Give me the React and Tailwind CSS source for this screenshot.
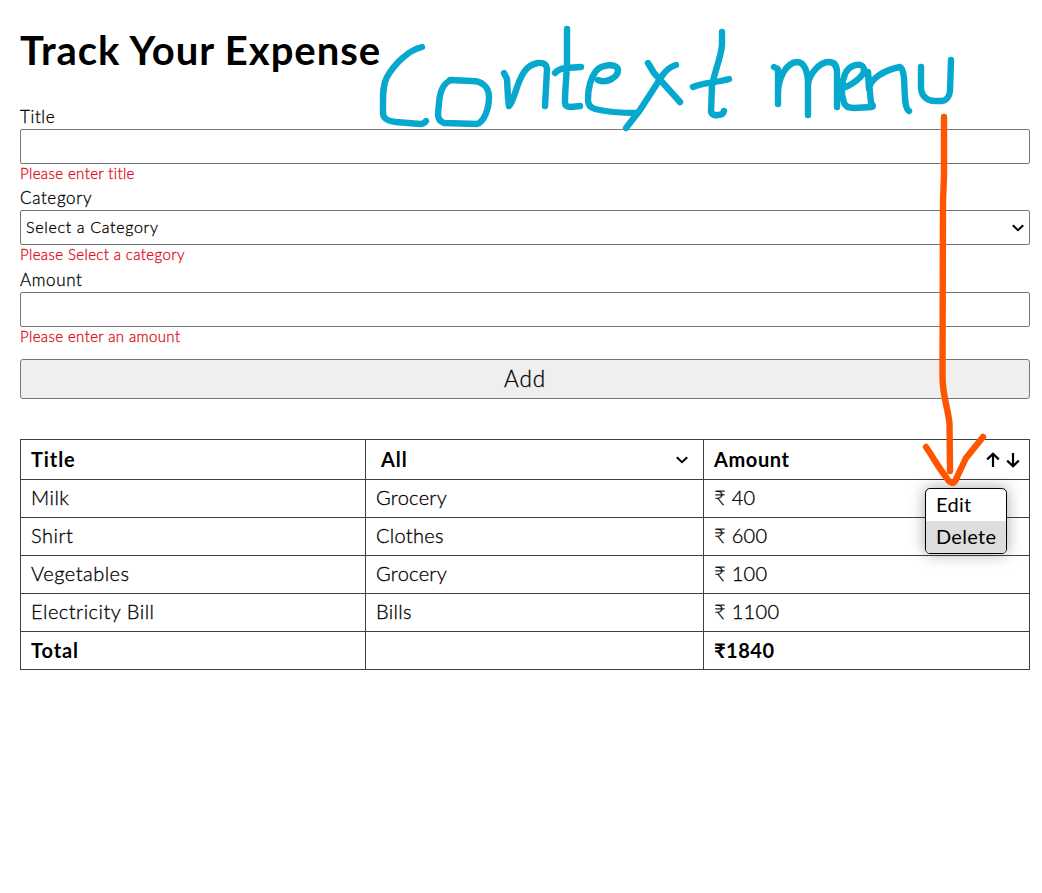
import React from "react";

const expenses = [
  ["Milk", "Grocery", "40"],
  ["Shirt", "Clothes", "600"],
  ["Vegetables", "Grocery", "100"],
  ["Electricity Bill", "Bills", "1100"],
];

function Chevron({ className }) {
  return (
    <svg className={className} width="14" height="10" viewBox="0 0 14 10" fill="none" stroke="#000" strokeWidth="2">
      <path d="M1.8 2.2 L7 7.2 L12.2 2.2" />
    </svg>
  );
}

function SortArrow({ down }) {
  return (
    <svg width="14" height="16" viewBox="0 0 14 16" fill="none" stroke="#000" strokeWidth="2.2">
      {down ? <path d="M7 1V14.2M1.2 8.6L7 14.2L12.8 8.6" /> : <path d="M7 15V1.8M1.2 7.4L7 1.8L12.8 7.4" />}
    </svg>
  );
}

function Field({ label, error, children }) {
  return (
    <div className="flex flex-col">
      <label className="h-[23px] text-[17px] leading-[21px] tracking-[0.65px]">{label}</label>
      <div className="flex h-[35px] items-center justify-between rounded-[2px] border border-[#767676] px-[5px]">
        {children}
      </div>
      <p className="h-5 text-[15px] leading-[18px] tracking-[0.38px] text-[#dc1020]">{error}</p>
    </div>
  );
}

function Annotation() {
  return (
    <svg className="pointer-events-none absolute left-0 top-0" width="1042" height="893" viewBox="0 0 1042 893" fill="none" strokeLinecap="round" strokeLinejoin="round">
      <g stroke="#06a9cd" strokeWidth="6.4">
        <path d="M422 47 C409 50 395 63 387 77 C383 84 383 93 383 102 L383 113 C383 119 388 121 396 122 L420 124 Q424 124 426 121" />
        <path d="M452 80 C444 82 440 90 439 103 L438 114 Q438 121 444 123 L477 124 C484 122 489 109 489 97 C489 87 482 81 472 81 L450 80" />
        <path d="M504 73 L507 79 L508 98 L509 106 C514 102 516 84 524 72 C531 62 546 59 547 69 L545 106" />
        <path d="M567 29 L567 60 C567 75 565 85 565 103 Q565 107 571 107 L580 106 M555 73 Q558 69 566 68 L581 67" />
        <path d="M598 80 C607 84 618 77 618 70 C617 63 602 64 596 71 C589 80 588 92 588 100 Q588 107 595 109 C607 112 622 113 637 113" />
        <path d="M648 63 L654 73 L680 102 M676 65 Q668 67 662 76 L640 110 L626 128" />
        <path d="M722 32 L722 45 C721 58 714 73 712 86 L711 112 Q713 116 718 115 Q723 115 724 111 M693 87 C704 82 716 83 729 79" />
        <path d="M774 67 L778 69 L778 104 L778 94 C778 80 785 63 797 62 C804 62 808 71 808 84 L808 115 L808 84 C809 76 818 62 829 62 Q837 62 837 73 L837 107" />
        <path d="M840 89 C851 86 865 76 864 69 C862 61 849 65 845 74 C841 84 841 94 844 103 Q846 108 854 108 L872 107 Q874 106 871 103 L868 72 L869 89 C870 79 884 70 900 67 Q903 68 904 78 C905 92 904 108 909 111" />
        <path d="M921 67 L921 84 C920 95 926 101 935 101 L942 101 Q949 100 950 91 L951 60" />
      </g>
      <path d="M944 117 L944 175 L943 202 L942.5 376 C942.5 397 948 407 949.5 424 L950 471 M926 447 C933 457 938 467 946 477 Q953 489 957 477 L966 458 L983 437" stroke="#ff5500" strokeWidth="6.4" />
    </svg>
  );
}

export default function App() {
  return (
    <main className="relative h-[893px] w-[1042px] overflow-hidden bg-white pl-5 pr-3 font-['Lato',sans-serif] font-light text-black">
      <h1 className="pt-[20px] text-[40px] font-bold leading-[60px] tracking-[0.95px]">Track Your Expense</h1>
      <form className="mt-[26px] flex flex-col gap-[3px] [-webkit-text-stroke:0.3px]">
        <Field label="Title" error="Please enter title" />
        <Field label="Category" error="Please Select a category">
          <span className="-mt-[2px] text-[16px] tracking-[0.68px]">Select a Category</span>
          <Chevron className="-mr-px" />
        </Field>
        <div className="pt-px">
          <Field label="Amount" error="Please enter an amount" />
        </div>
        <button type="button" className="mt-[9px] h-10 rounded-[3px] border border-[#767676] bg-[#efefef] text-[22.5px] leading-[38px] tracking-[0.9px]">
          Add
        </button>
      </form>
      <table className="mt-10 w-[1010px] table-fixed border-collapse text-[20px] leading-[27px] [&_td]:border [&_td]:border-[#404040] [&_td]:px-[10px] [&_td]:pt-0 [&_th]:border [&_th]:border-[#404040] [&_th]:px-[10px] [&_th]:py-0">
        <colgroup>
          <col className="w-[345px]" />
          <col className="w-[338px]" />
          <col />
        </colgroup>
        <thead>
          <tr className="h-10 text-left">
            <th className="tracking-[0.9px]">Title</th>
            <th>
              <div className="flex items-center justify-between pl-[5px] pr-1 tracking-[1px]">
                <span>All</span>
                <Chevron />
              </div>
            </th>
            <th>
              <div className="flex items-center justify-between tracking-[0.6px]">
                <span>Amount</span>
                <span className="-mr-[1px] flex gap-[6px]">
                  <SortArrow />
                  <SortArrow down />
                </span>
              </div>
            </th>
          </tr>
        </thead>
        <tbody className="tracking-[0.5px]">
          {expenses.map(([title, category, amount]) => (
            <tr key={title} className="h-[38px] [-webkit-text-stroke:0.3px]">
              <td className="pb-[2px]">{title}</td>
              <td className="pb-[2px] tracking-[0.3px]">{category}</td>
              <td className="pb-[2px] tracking-[0.35px]">₹ {amount}</td>
            </tr>
          ))}
          <tr className="h-[38px] font-bold">
            <td className="pb-0 tracking-[0.9px]">Total</td>
            <td></td>
            <td className="pb-0">₹1840</td>
          </tr>
        </tbody>
      </table>
      <div className="absolute left-[925px] top-[488px] flex h-[66px] w-[82px] flex-col overflow-hidden rounded-[5px] border border-black bg-white text-[20px] font-normal leading-[31px] tracking-[0.3px] shadow-[0_0_15px_rgba(0,0,0,0.35)]">
        <div className="h-8 px-[10px]">Edit</div>
        <div className="h-8 bg-[#dddddd] px-[10px]">Delete</div>
      </div>
      <Annotation />
    </main>
  );
}
